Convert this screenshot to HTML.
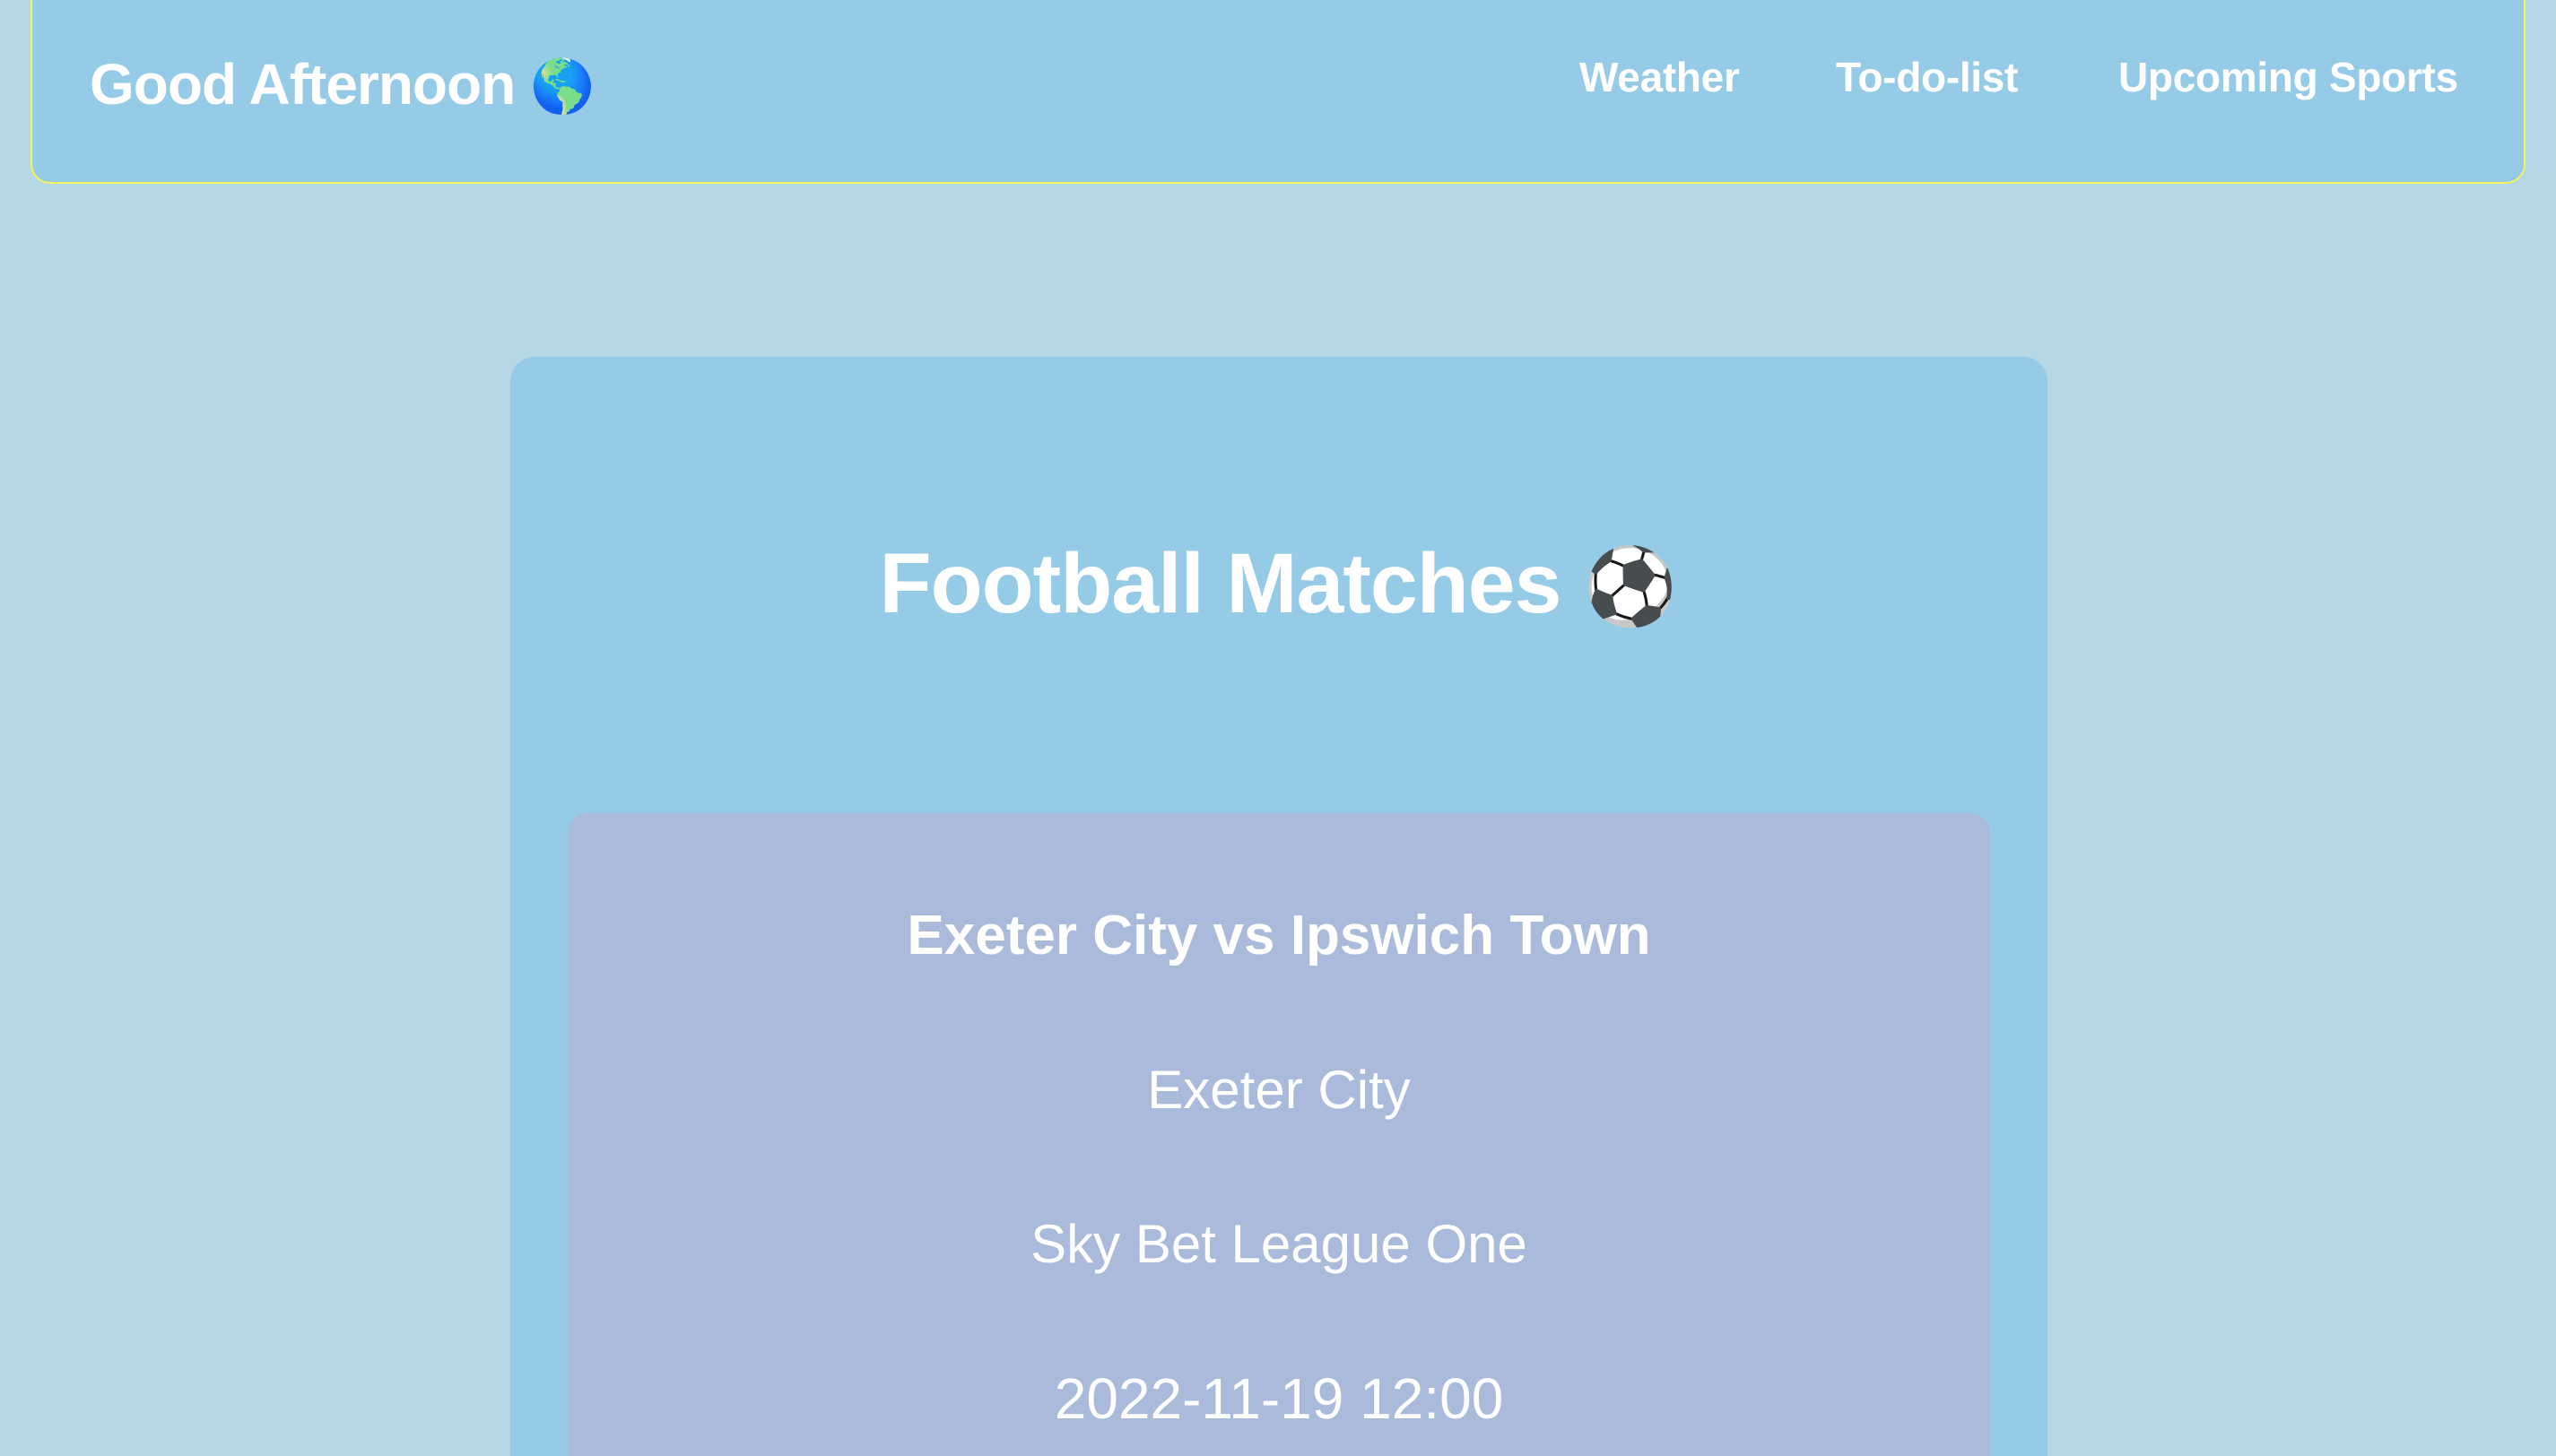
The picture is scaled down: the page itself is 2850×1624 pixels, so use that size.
<!DOCTYPE html>
<html><head><meta charset="utf-8"><style>
html,body{margin:0;padding:0;width:2850px;height:1624px;overflow:hidden;}
body{background:#b5d8e4;position:relative;font-family:"Liberation Sans",sans-serif;color:#fff;}
.hdr{position:absolute;left:34px;top:-30px;width:2782px;height:235px;background:#96cbe8;border:2px solid #f3f35a;border-radius:22px;box-sizing:border-box;}
.logo{position:absolute;left:100px;top:62px;font-size:64px;font-weight:bold;letter-spacing:-1px;line-height:1;}
.logo span{font-size:58px;}
.nav{position:absolute;top:63px;font-size:46px;font-weight:bold;line-height:1;letter-spacing:-0.3px;}
.card{position:absolute;left:569px;top:398px;width:1714px;height:1226px;background:#96cbe8;border-radius:27px 27px 0 0;}
.title{position:absolute;left:0;right:0;top:604px;text-align:center;font-size:95px;font-weight:bold;line-height:1;letter-spacing:-1px;}
.title span{font-size:84px;}
.inner{position:absolute;left:633px;top:907px;width:1586px;height:717px;background:#aabadb;border-radius:22px 22px 0 0;}
.t{position:absolute;left:633px;width:1586px;text-align:center;line-height:1;font-size:60px;}
</style></head><body>
<div class="hdr"></div>
<div class="logo">Good Afternoon <span>🌎</span></div>
<div class="nav" style="left:1761px">Weather</div>
<div class="nav" style="left:2047px">To-do-list</div>
<div class="nav" style="left:2362px">Upcoming Sports</div>
<div class="card"></div>
<div class="title">Football Matches <span>⚽</span></div>
<div class="inner"></div>
<div class="t" style="top:1013px;font-weight:bold;font-size:62px">Exeter City vs Ipswich Town</div>
<div class="t" style="top:1186px">Exeter City</div>
<div class="t" style="top:1358px">Sky Bet League One</div>
<div class="t" style="top:1528px;font-size:64px">2022-11-19 12:00</div>
</body></html>
